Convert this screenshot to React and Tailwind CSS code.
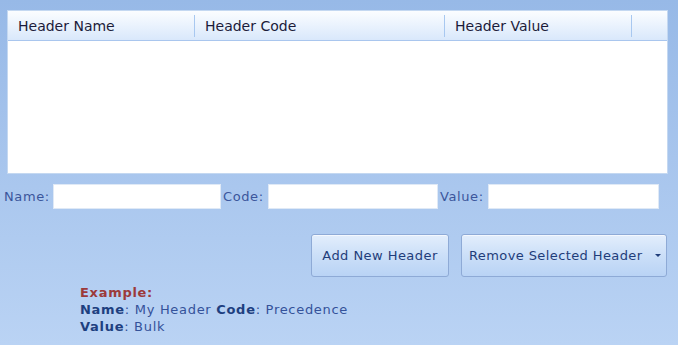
export default function App() {
  const font = { fontFamily: '"DejaVu Sans", Verdana, sans-serif' };
  return (
    <div
      className="w-[678px] h-[345px] bg-gradient-to-b from-[#97b9e7] to-[#bad3f4] overflow-hidden flex flex-col"
      style={font}
    >
      <div className="pt-[10px] pl-[7px] pr-[10px]">
        <div className="h-[164px] bg-white border border-[#c4d8f1] flex flex-col">
          <div className="h-[30px] flex bg-gradient-to-b from-[#fbfdff] to-[#d9e8fb] border-b border-[#a9c6ee] text-[14px] text-[#1c1c3a]">
            <div className="w-[187px] flex items-center pl-[10px] pt-[1px] relative">
              Header Name
              <span className="absolute right-0 top-[4px] bottom-[3px] w-px bg-[#a8c8f0]" />
            </div>
            <div className="w-[250px] flex items-center pl-[10px] pt-[1px] relative">
              Header Code
              <span className="absolute right-0 top-[4px] bottom-[3px] w-px bg-[#a8c8f0]" />
            </div>
            <div className="w-[187px] flex items-center pl-[10px] pt-[1px] relative">
              Header Value
              <span className="absolute right-0 top-[4px] bottom-[3px] w-px bg-[#a8c8f0]" />
            </div>
            <div className="flex-1" />
          </div>
        </div>
      </div>

      <div className="mt-[10px] pl-[4px] flex items-center text-[13px] tracking-[0.6px] text-[#3b569c] h-[25px]">
        <span className="w-[49px] whitespace-nowrap">Name:</span>
        <div className="w-[168px] h-[25px] bg-white border border-[#dfe9f6]" />
        <span className="ml-[2px] w-[45px] whitespace-nowrap">Code:</span>
        <div className="w-[170px] h-[25px] bg-white border border-[#dfe9f6]" />
        <span className="ml-[2px] w-[48px] whitespace-nowrap">Value:</span>
        <div className="w-[171px] h-[25px] bg-white border border-[#dfe9f6]" />
      </div>

      <div className="mt-[25px] flex justify-end pr-[11px] gap-[12px] text-[13px] tracking-[0.45px] text-[#1f3d7a]">
        <button className="w-[138px] h-[43px] rounded-[3px] border border-[#8eaad6] bg-gradient-to-b from-[#e3eefc] via-[#cbdff8] to-[#b9d3f5] flex items-center justify-center shadow-[inset_0_1px_0_#f4f8fe] whitespace-nowrap">
          Add New Header
        </button>
        <button className="w-[206px] h-[43px] rounded-[3px] border border-[#8eaad6] bg-gradient-to-b from-[#e3eefc] via-[#cbdff8] to-[#b9d3f5] flex items-center pl-[7px] pr-[4px] shadow-[inset_0_1px_0_#f4f8fe] whitespace-nowrap">
          <span className="flex-1 text-left tracking-[0.4px]">Remove Selected Header</span>
          <svg width="8" height="5" viewBox="0 0 8 5" className="ml-[2px]">
            <path d="M1 1 L7 1 L4 4 Z" fill="#1f3d7a" />
          </svg>
        </button>
      </div>

      <div className="mt-[7px] pl-[80px] text-[13px] tracking-[0.7px] leading-[17px] text-[#34529a]">
        <div className="font-bold text-[#9c3a3a]">Example:</div>
        <div>
          <b className="text-[#1e3f80]">Name</b>: My Header <b className="text-[#1e3f80]">Code</b>: Precedence
        </div>
        <div>
          <b className="text-[#1e3f80]">Value</b>: Bulk
        </div>
      </div>
    </div>
  );
}
